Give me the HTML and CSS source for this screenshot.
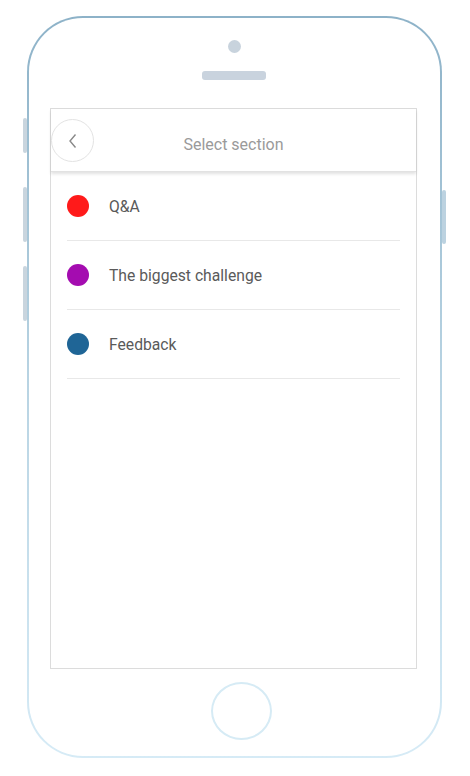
FILE: index.html
```html
<!DOCTYPE html>
<html lang="en">
<head>
    <meta charset="UTF-8">
    <meta name="viewport" content="width=device-width, initial-scale=1.0">
    <title>Select section</title>
    <link rel="stylesheet" href="styles.css">
</head>
<body>
    <div class="phone">
        <span class="side-btn left one"></span>
        <span class="side-btn left two"></span>
        <span class="side-btn left three"></span>
        <span class="side-btn right one"></span>
        <div class="phone-inner">
            <div class="camera"></div>
            <div class="speaker"></div>
            <section class="screen">
                <header class="screen-header">
                    <button class="back-button">
                        <svg width="10" height="16" viewBox="0 0 10 16"><path d="M7.5 1.5 L2 8 L7.5 14.5" fill="none" stroke="#888" stroke-width="1.4"/></svg>
                    </button>
                    <h1>Select section</h1>
                </header>
                <ul class="section-list">
                    <li class="section-item"><span class="dot red"></span>Q&amp;A</li>
                    <li class="section-item"><span class="dot purple"></span>The biggest challenge</li>
                    <li class="section-item"><span class="dot blue"></span>Feedback</li>
                </ul>
            </section>
            <div class="home-button"></div>
        </div>
    </div>
</body>
</html>
```
FILE: styles.css
```css
body {
    margin: 0;
    background-color: #fff;
    font-family: Roboto, "Liberation Sans", sans-serif;
}

.phone {
    position: relative;
    margin: 16px 0 0 27px;
    width: 415px;
    height: 742px;
    padding: 2px;
    box-sizing: border-box;
    border-radius: 56px;
    background: linear-gradient(to bottom, #8db2c8 0%, #b9d4e3 50%, #d6ebf6 100%);
}

.phone-inner {
    height: 100%;
    border-radius: 54px;
    background-color: #fff;
    display: flex;
    flex-direction: column;
    align-items: center;
}

/* side buttons */
.side-btn {
    position: absolute;
    width: 4px;
    background-color: #c9d5de;
    border-radius: 2px;
}

.side-btn.left {
    left: -4px;
}

.side-btn.left.one {
    top: 102px;
    height: 35px;
}

.side-btn.left.two {
    top: 171px;
    height: 55px;
}

.side-btn.left.three {
    top: 250px;
    height: 55px;
}

.side-btn.right {
    right: -4px;
    top: 174px;
    height: 54px;
    background-color: #bcd2e0;
}

.camera {
    margin-top: 22px;
    width: 13px;
    height: 13px;
    border-radius: 50%;
    background-color: #c8d3dd;
    margin-left: -1px;
}

.speaker {
    margin-top: 18px;
    width: 64px;
    height: 9px;
    border-radius: 3px;
    background-color: #c9d3de;
    margin-left: -1px;
}

.screen {
    margin-top: 28px;
    width: 367px;
    height: 561px;
    box-sizing: border-box;
    border: 1px solid #dcdcdc;
    align-self: flex-start;
    margin-left: 21px;
}

.screen-header {
    position: relative;
    height: 62px;
    display: flex;
    align-items: center;
    justify-content: center;
    box-shadow: 0 2px 3px rgba(0, 0, 0, 0.12);
    border-bottom: 1px solid #e2e2e2;
}

.back-button {
    position: absolute;
    left: 0;
    top: 10px;
    width: 43px;
    height: 43px;
    border-radius: 50%;
    border: 1px solid #e3e3e3;
    background-color: #fff;
    display: flex;
    align-items: center;
    justify-content: center;
    padding: 0;
}

.screen-header h1 {
    margin: 8px 0 0 0;
    font-size: 16px;
    font-weight: normal;
    color: #9a9a9a;
}

.section-list {
    list-style: none;
    margin: 0;
    padding: 0 16px;
}

.section-item {
    height: 68px;
    display: flex;
    align-items: center;
    border-bottom: 1px solid #e8e8e8;
    font-size: 15.7px;
    color: #5a5a5a;
}

.dot {
    width: 22px;
    height: 22px;
    border-radius: 50%;
    margin-right: 20px;
}

.dot.red {
    background-color: #ff1a1a;
}

.dot.purple {
    background-color: #a40cb0;
}

.dot.blue {
    background-color: #1f6596;
}

.home-button {
    margin-top: 13px;
    margin-left: 13px;
    width: 57px;
    height: 54px;
    border-radius: 50%;
    border: 2px solid #d6ebf5;
}
```
